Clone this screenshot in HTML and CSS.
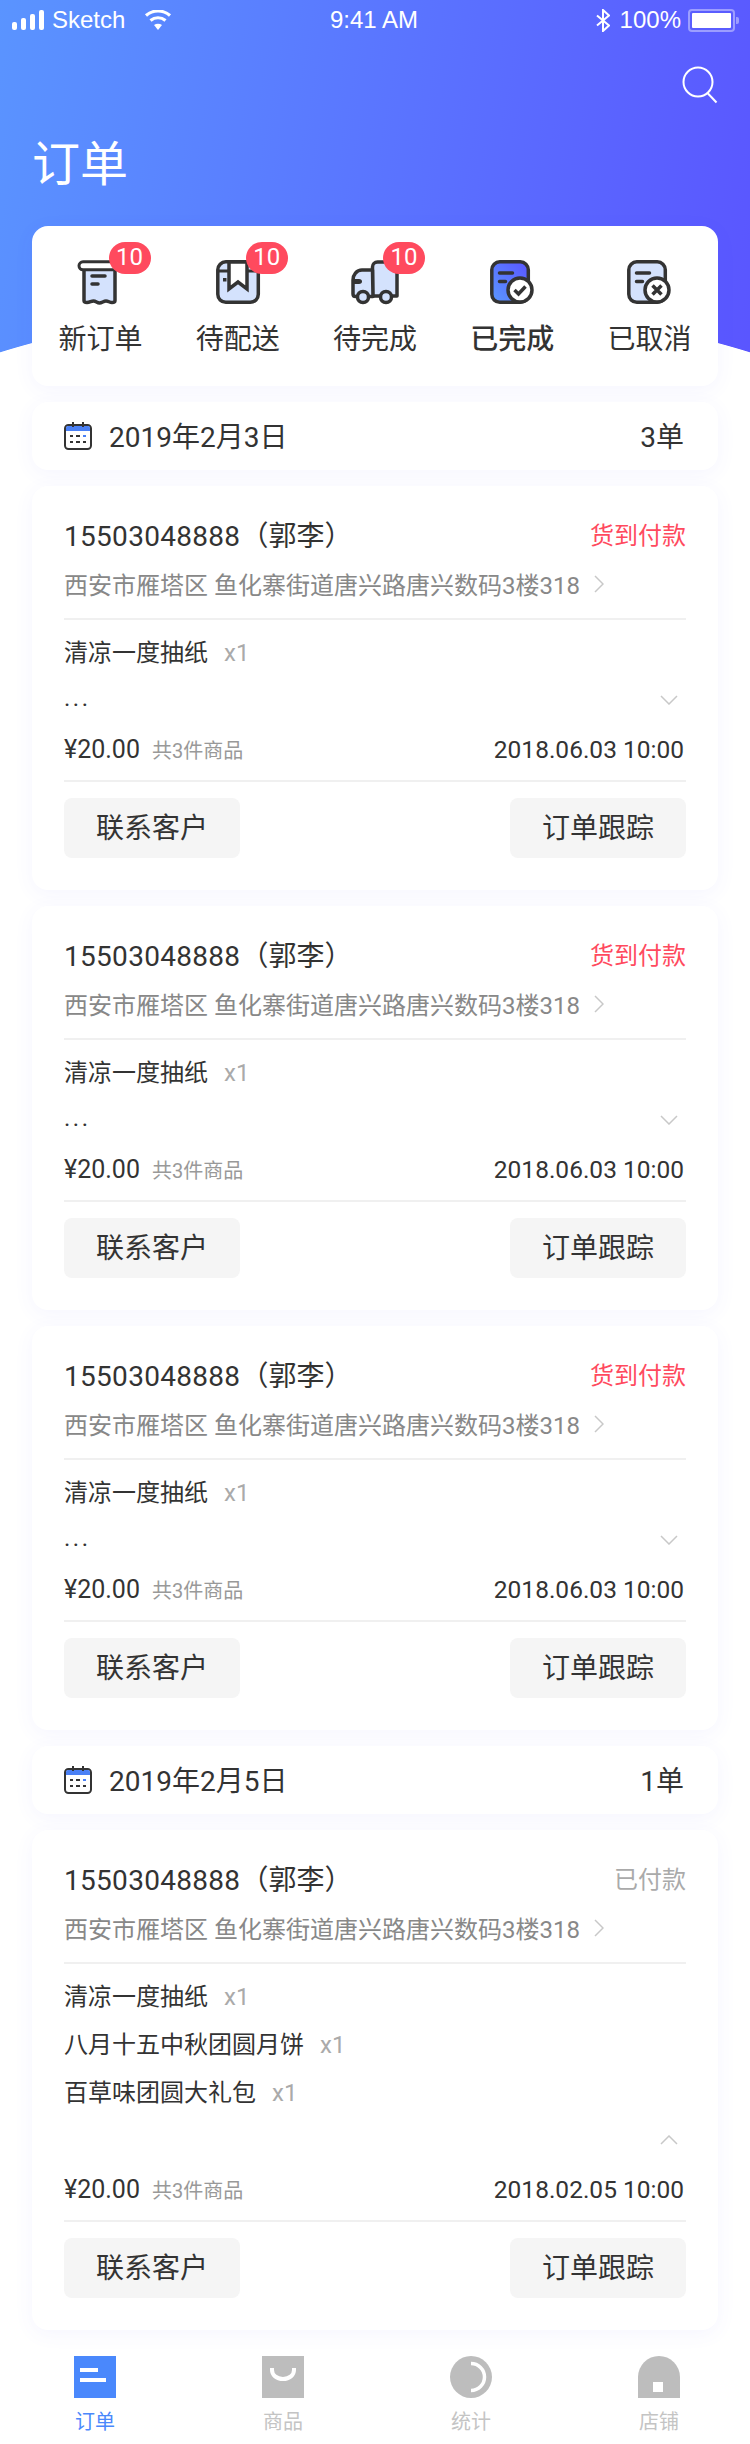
FILE: index.html
```html
<!DOCTYPE html>
<html lang="zh-CN">
<head>
  <meta charset="UTF-8">
  <meta name="viewport" content="width=device-width, initial-scale=1.0">
  <title>订单</title>
  <link rel="stylesheet" href="styles.css">
</head>
<body>
  <header class="hero">
    <div class="status-bar">
      <div class="status-left">
        <svg class="signal" width="32" height="20" viewBox="0 0 32 20"><rect x="0" y="12" width="5" height="8" rx="2"/><rect x="9" y="8" width="5" height="12" rx="2"/><rect x="18" y="4" width="5" height="16" rx="2"/><rect x="27" y="0" width="5" height="20" rx="2"/></svg>
        <span>Sketch</span>
        <svg class="wifi" width="28" height="20" viewBox="0 0 28 20"><path d="M14 20l-4-5c2.400-1.800 5.600-1.800 8 0z" fill="#fff"/><path d="M6.500 10.500c4.500-3.700 10.500-3.700 15 0M2 5.500c7-6 17-6 24 0" fill="none" stroke="#fff" stroke-width="3.200"/></svg>
      </div>
      <div class="status-time">9:41 AM</div>
      <div class="status-right">
        <svg width="14" height="23" viewBox="0 0 14 23"><path d="M1 6.500l12 10-6 5.500V1l6 5.500-12 10" fill="none" stroke="#fff" stroke-width="2"/></svg>
        <span>100%</span>
        <div class="battery"><div class="battery-level"></div></div>
        <div class="battery-tip"></div>
      </div>
    </div>

    <div class="search-row">
      <svg width="36" height="38" viewBox="0 0 36 38"><circle cx="16" cy="16" r="14.500" fill="none" stroke="#fff" stroke-width="2"/><path d="M25.500 27l9 9.500" stroke="#fff" stroke-width="2" fill="none"/></svg>
    </div>
    <h1 class="page-title">订单</h1>

    <nav class="summary card">
      <a class="summary-item">
        <div class="summary-icon">
          <svg width="44" height="44" viewBox="0 0 44 44"><path d="M5 6v34.500c0 1.500 1.500 2 3 2 3 0 4-1.500 6.500-1.500s3.500 2 6 2 4-2 6.500-2 3.500 1.500 6 1.500c1.500 0 3-.5 3-2V6z" fill="#d4e2fd" stroke="#333" stroke-width="3.500" stroke-linejoin="round"/><path d="M36 1.800H4a4 4 0 0 0 0 8h32" fill="#fff" stroke="#333" stroke-width="3"/><path d="M13 16h13M13 24h6" stroke="#333" stroke-width="3.500" stroke-linecap="round"/></svg>
          <span class="badge">10</span>
        </div>
        <span class="summary-label">新订单</span>
      </a>
      <a class="summary-item">
        <div class="summary-icon">
          <svg width="44" height="44" viewBox="0 0 44 44"><rect x="1.800" y="1.800" width="40.500" height="40.500" rx="8" fill="#d4e2fd" stroke="#333" stroke-width="3.500"/><path d="M2 11h40" stroke="#333" stroke-width="3"/><path d="M13 2v27l9-7 9 7V2z" fill="#fff" stroke="#333" stroke-width="3.500"/><rect x="7" y="18" width="3.500" height="3.500" fill="#333"/></svg>
          <span class="badge">10</span>
        </div>
        <span class="summary-label">待配送</span>
      </a>
      <a class="summary-item">
        <div class="summary-icon">
          <svg width="44" height="44" viewBox="0 0 44 44"><path d="M19.500 36V7a5 5 0 0 1 5-5H44v34z" fill="#d4e2fd" stroke="#333" stroke-width="3.500" stroke-linejoin="round"/><path d="M19.500 10H9C3.500 10 0 15 0 20v14c0 1.500 1 2.500 2.500 2.500H20z" fill="#d4e2fd" stroke="#333" stroke-width="3.500" stroke-linejoin="round"/><path d="M1 19h5c2 0 3 1 3 2.500S8 24 6 24H1z" fill="#333"/><circle cx="10" cy="37" r="5.500" fill="#d4e2fd" stroke="#333" stroke-width="3.500"/><circle cx="33" cy="37" r="5.500" fill="#d4e2fd" stroke="#333" stroke-width="3.500"/></svg>
          <span class="badge">10</span>
        </div>
        <span class="summary-label">待完成</span>
      </a>
      <a class="summary-item is-active">
        <div class="summary-icon">
          <svg width="44" height="44" viewBox="0 0 44 44"><defs><linearGradient id="doneFill" x1="0" y1="1" x2="1" y2="0"><stop offset="0" stop-color="#5a98ff"/><stop offset="1" stop-color="#5a55ff"/></linearGradient></defs><rect x="1.800" y="1.800" width="36.500" height="40.500" rx="8" fill="url(#doneFill)" stroke="#333" stroke-width="3.500"/><path d="M9.500 13h13M9.500 21.500h6" stroke="#333" stroke-width="3.500" stroke-linecap="round"/><circle cx="30" cy="30" r="12" fill="#fff" stroke="#333" stroke-width="3.500"/><path d="M24.500 30l4 4 7-7.500" fill="none" stroke="#333" stroke-width="3.500"/></svg>
        </div>
        <span class="summary-label">已完成</span>
      </a>
      <a class="summary-item">
        <div class="summary-icon">
          <svg width="44" height="44" viewBox="0 0 44 44"><rect x="1.800" y="1.800" width="36.500" height="40.500" rx="8" fill="#d4e2fd" stroke="#333" stroke-width="3.500"/><path d="M9.500 13h13M9.500 21.500h6" stroke="#333" stroke-width="3.500" stroke-linecap="round"/><circle cx="30" cy="30" r="12" fill="#fff" stroke="#333" stroke-width="3.500"/><path d="M25.500 25.500l9 9M34.500 25.500l-9 9" fill="none" stroke="#333" stroke-width="3.500"/></svg>
        </div>
        <span class="summary-label">已取消</span>
      </a>
    </nav>
  </header>

  <main class="order-list">
    <section class="date-bar card">
      <div class="date-left">
        <svg width="28" height="28" viewBox="0 0 28 28"><rect x="1" y="3" width="26" height="24" rx="3.500" fill="#fff" stroke="#333" stroke-width="2"/><path d="M2 9V6a2 2 0 0 1 2-2h20a2 2 0 0 1 2 2v3z" fill="#4a80f5"/><path d="M9 0v5M19 0v5" stroke="#333" stroke-width="2"/><path d="M6 14h3M12 14h4M6 20h3M12 20h4M19 20h3" stroke="#333" stroke-width="2"/><path d="M19 14h3" stroke="#4a80f5" stroke-width="2"/></svg>
        <span>2019年2月3日</span>
      </div>
      <span class="date-count">3单</span>
    </section>

    <article class="order card">
      <div class="order-head">
        <span class="order-customer"><span class="phone">15503048888</span>（郭李）</span>
        <span class="order-status">货到付款</span>
      </div>
      <div class="order-address">
        <span>西安市雁塔区 鱼化寨街道唐兴路唐兴数码3楼318</span>
        <svg width="10" height="18" viewBox="0 0 10 18"><path d="M1 1l8 8-8 8" fill="none" stroke="#c8c8c8" stroke-width="1.500"/></svg>
      </div>
      <div class="order-items">
        <div class="order-item"><span>清凉一度抽纸</span><span class="qty">x1</span></div>
        <div class="order-more">
          <span class="dots">...</span>
          <svg width="18" height="10" viewBox="0 0 18 10"><path d="M1 1l8 8 8-8" fill="none" stroke="#c8c8c8" stroke-width="1.500"/></svg>
        </div>
        <div class="order-total">
          <div><span class="price">¥20.00</span><span class="total-count">共3件商品</span></div>
          <span class="order-time">2018.06.03 10:00</span>
        </div>
      </div>
      <div class="order-actions">
        <button class="btn">联系客户</button>
        <button class="btn">订单跟踪</button>
      </div>
    </article>

    <article class="order card">
      <div class="order-head">
        <span class="order-customer"><span class="phone">15503048888</span>（郭李）</span>
        <span class="order-status">货到付款</span>
      </div>
      <div class="order-address">
        <span>西安市雁塔区 鱼化寨街道唐兴路唐兴数码3楼318</span>
        <svg width="10" height="18" viewBox="0 0 10 18"><path d="M1 1l8 8-8 8" fill="none" stroke="#c8c8c8" stroke-width="1.500"/></svg>
      </div>
      <div class="order-items">
        <div class="order-item"><span>清凉一度抽纸</span><span class="qty">x1</span></div>
        <div class="order-more">
          <span class="dots">...</span>
          <svg width="18" height="10" viewBox="0 0 18 10"><path d="M1 1l8 8 8-8" fill="none" stroke="#c8c8c8" stroke-width="1.500"/></svg>
        </div>
        <div class="order-total">
          <div><span class="price">¥20.00</span><span class="total-count">共3件商品</span></div>
          <span class="order-time">2018.06.03 10:00</span>
        </div>
      </div>
      <div class="order-actions">
        <button class="btn">联系客户</button>
        <button class="btn">订单跟踪</button>
      </div>
    </article>

    <article class="order card">
      <div class="order-head">
        <span class="order-customer"><span class="phone">15503048888</span>（郭李）</span>
        <span class="order-status">货到付款</span>
      </div>
      <div class="order-address">
        <span>西安市雁塔区 鱼化寨街道唐兴路唐兴数码3楼318</span>
        <svg width="10" height="18" viewBox="0 0 10 18"><path d="M1 1l8 8-8 8" fill="none" stroke="#c8c8c8" stroke-width="1.500"/></svg>
      </div>
      <div class="order-items">
        <div class="order-item"><span>清凉一度抽纸</span><span class="qty">x1</span></div>
        <div class="order-more">
          <span class="dots">...</span>
          <svg width="18" height="10" viewBox="0 0 18 10"><path d="M1 1l8 8 8-8" fill="none" stroke="#c8c8c8" stroke-width="1.500"/></svg>
        </div>
        <div class="order-total">
          <div><span class="price">¥20.00</span><span class="total-count">共3件商品</span></div>
          <span class="order-time">2018.06.03 10:00</span>
        </div>
      </div>
      <div class="order-actions">
        <button class="btn">联系客户</button>
        <button class="btn">订单跟踪</button>
      </div>
    </article>

    <section class="date-bar card">
      <div class="date-left">
        <svg width="28" height="28" viewBox="0 0 28 28"><rect x="1" y="3" width="26" height="24" rx="3.500" fill="#fff" stroke="#333" stroke-width="2"/><path d="M2 9V6a2 2 0 0 1 2-2h20a2 2 0 0 1 2 2v3z" fill="#4a80f5"/><path d="M9 0v5M19 0v5" stroke="#333" stroke-width="2"/><path d="M6 14h3M12 14h4M6 20h3M12 20h4M19 20h3" stroke="#333" stroke-width="2"/><path d="M19 14h3" stroke="#4a80f5" stroke-width="2"/></svg>
        <span>2019年2月5日</span>
      </div>
      <span class="date-count">1单</span>
    </section>

    <article class="order card">
      <div class="order-head">
        <span class="order-customer"><span class="phone">15503048888</span>（郭李）</span>
        <span class="order-status is-paid">已付款</span>
      </div>
      <div class="order-address">
        <span>西安市雁塔区 鱼化寨街道唐兴路唐兴数码3楼318</span>
        <svg width="10" height="18" viewBox="0 0 10 18"><path d="M1 1l8 8-8 8" fill="none" stroke="#c8c8c8" stroke-width="1.500"/></svg>
      </div>
      <div class="order-items">
        <div class="order-item"><span>清凉一度抽纸</span><span class="qty">x1</span></div>
        <div class="order-item"><span>八月十五中秋团圆月饼</span><span class="qty">x1</span></div>
        <div class="order-item"><span>百草味团圆大礼包</span><span class="qty">x1</span></div>
        <div class="order-more">
          <span></span>
          <svg width="18" height="10" viewBox="0 0 18 10"><path d="M1 9l8-8 8 8" fill="none" stroke="#c8c8c8" stroke-width="1.500"/></svg>
        </div>
        <div class="order-total">
          <div><span class="price">¥20.00</span><span class="total-count">共3件商品</span></div>
          <span class="order-time">2018.02.05 10:00</span>
        </div>
      </div>
      <div class="order-actions">
        <button class="btn">联系客户</button>
        <button class="btn">订单跟踪</button>
      </div>
    </article>
  </main>

  <footer class="tabbar">
    <a class="tab is-active">
      <svg width="42" height="42" viewBox="0 0 42 42"><rect width="42" height="42" fill="#4a88fc"/><path d="M6 12h18v4H6zM6 22h26v4H6z" fill="#fff"/></svg>
      <span>订单</span>
    </a>
    <a class="tab">
      <svg width="42" height="42" viewBox="0 0 42 42"><rect width="42" height="42" fill="#bdbdbd"/><path d="M10 12v2c0 5 4.500 9 11 9s11-4 11-9v-2" fill="none" stroke="#fff" stroke-width="4"/></svg>
      <span>商品</span>
    </a>
    <a class="tab">
      <svg width="42" height="42" viewBox="0 0 42 42"><circle cx="21" cy="21" r="21" fill="#bdbdbd"/><path d="M21 7.500a13.500 13.500 0 0 1 0 27" fill="none" stroke="#fff" stroke-width="3.500"/></svg>
      <span>统计</span>
    </a>
    <a class="tab">
      <svg width="42" height="42" viewBox="0 0 42 42"><path d="M0 42V21a21 21 0 0 1 42 0v21z" fill="#bdbdbd"/><rect x="15" y="26" width="10" height="10" fill="#fff"/></svg>
      <span>店铺</span>
    </a>
  </footer>
</body>
</html>
```

FILE: styles.css
```css
* {
  box-sizing: border-box;
}
body {
  margin: 0;
  width: 750px;
  background: #fff;
  color: #333;
  font-family: Roboto, "Noto Sans CJK SC", sans-serif;
}
.card {
  background: #fff;
  border-radius: 16px;
  box-shadow: 0 4px 20px rgba(80, 90, 255, 0.06);
}

/* header */
.hero {
  height: 402px;
  background:
    radial-gradient(ellipse 600px 232px at 375px 533px, #fff 99.7%, rgba(255, 255, 255, 0) 100%),
    linear-gradient(100deg, #5a94ff, #5a55ff);
}
.status-bar {
  display: flex;
  align-items: center;
  height: 40px;
  padding: 0 11px 0 12px;
  color: #fff;
  font-family: "Liberation Sans", sans-serif;
  font-size: 24px;
}
.status-left, .status-right {
  flex: 1;
  display: flex;
  align-items: center;
}
.status-right {
  justify-content: flex-end;
}
.status-time {
  margin-right: 3px;
}
.signal {
  fill: #fff;
  margin-right: 8px;
}
.wifi {
  margin-left: 19px;
}
.status-right span {
  margin: 0 7px 0 10px;
}
.battery {
  width: 47px;
  height: 23px;
  padding: 2px;
  border: 2px solid rgba(255, 255, 255, 0.4);
  border-radius: 4px;
}
.battery-level {
  height: 100%;
  background: #fff;
  border-radius: 1px;
}
.battery-tip {
  width: 3px;
  height: 7px;
  margin-left: 1px;
  background: rgba(255, 255, 255, 0.4);
  border-radius: 0 2px 2px 0;
}
.search-row {
  display: flex;
  justify-content: flex-end;
  height: 38px;
  margin-top: 26px;
  padding-right: 32px;
}
.page-title {
  margin: 31px 0;
  padding-left: 32px;
  color: #fff;
  font-size: 48px;
  font-weight: 400;
  line-height: 60px;
}

.summary {
  display: grid;
  grid-template-columns: repeat(5, 1fr);
  height: 160px;
  margin: 0 32px;
  padding-top: 34px;
}
.summary-item {
  display: flex;
  flex-direction: column;
  align-items: center;
}
.summary-icon {
  position: relative;
  width: 44px;
  height: 44px;
}
.summary-icon svg {
  display: block;
  overflow: visible;
}
.badge {
  position: absolute;
  left: 30px;
  top: -18px;
  width: 42px;
  height: 32px;
  background: #ff4a5e;
  border-radius: 16px;
  color: #fff;
  font-size: 24px;
  line-height: 30px;
  text-align: center;
}
.summary-label {
  margin-top: 16px;
  font-size: 28px;
  line-height: 40px;
}
.is-active .summary-label {
  font-weight: 500;
}

/* orders */
.order-list {
  display: flex;
  flex-direction: column;
  gap: 16px;
  padding: 0 32px;
}
.date-bar {
  display: flex;
  justify-content: space-between;
  align-items: center;
  height: 68px;
  padding: 0 34px 0 32px;
  font-size: 28px;
}
.date-left {
  display: flex;
  align-items: center;
  gap: 17px;
}
.date-left span, .date-count {
  padding-bottom: 2px;
}
.order {
  padding: 26px 32px 32px;
}
.order-head {
  display: flex;
  justify-content: space-between;
  align-items: center;
  height: 48px;
  padding-bottom: 5px;
}
.order-customer {
  font-size: 28px;
}
.phone {
  letter-spacing: 0.3px;
}
.order-status {
  color: #ff4a5e;
  font-size: 24px;
}
.order-status.is-paid {
  color: #aaa;
}
.order-address {
  display: flex;
  align-items: center;
  gap: 14px;
  height: 48px;
  margin-top: 2px;
  padding-bottom: 5px;
  color: #888;
  font-size: 24px;
}
.order-items {
  margin-top: 8px;
  padding: 8px 0;
  border-top: 2px solid #f0f0f0;
  border-bottom: 2px solid #f0f0f0;
}
.order-item, .order-more, .order-total {
  height: 48px;
  font-size: 24px;
  line-height: 51px;
}
.qty {
  margin-left: 16px;
  color: #aaa;
}
.order-more {
  display: flex;
  justify-content: space-between;
  align-items: center;
  padding-right: 8px;
}
.dots {
  letter-spacing: 2.5px;
  padding-bottom: 3px;
}
.order-total {
  display: flex;
  justify-content: space-between;
}
.price {
  font-size: 25px;
}
.total-count {
  margin-left: 12px;
  color: #999;
  font-size: 20px;
}
.order-time {
  padding-right: 2px;
  font-size: 24.500px;
}
.order-actions {
  display: flex;
  justify-content: space-between;
  margin-top: 16px;
}
.btn {
  width: 176px;
  height: 60px;
  padding: 0 0 5px;
  background: #f5f5f5;
  border: none;
  border-radius: 8px;
  color: #333;
  font-family: inherit;
  font-size: 28px;
}

/* tabs */
.tabbar {
  display: grid;
  grid-template-columns: repeat(4, 188px);
  padding: 26px 0 7px 1px;
}
.tab {
  display: flex;
  flex-direction: column;
  align-items: center;
  color: #c4c4c4;
  font-size: 20px;
  line-height: 30px;
}
.tab svg {
  display: block;
  margin-bottom: 9px;
}
.tab.is-active {
  color: #4a88fc;
}
```
